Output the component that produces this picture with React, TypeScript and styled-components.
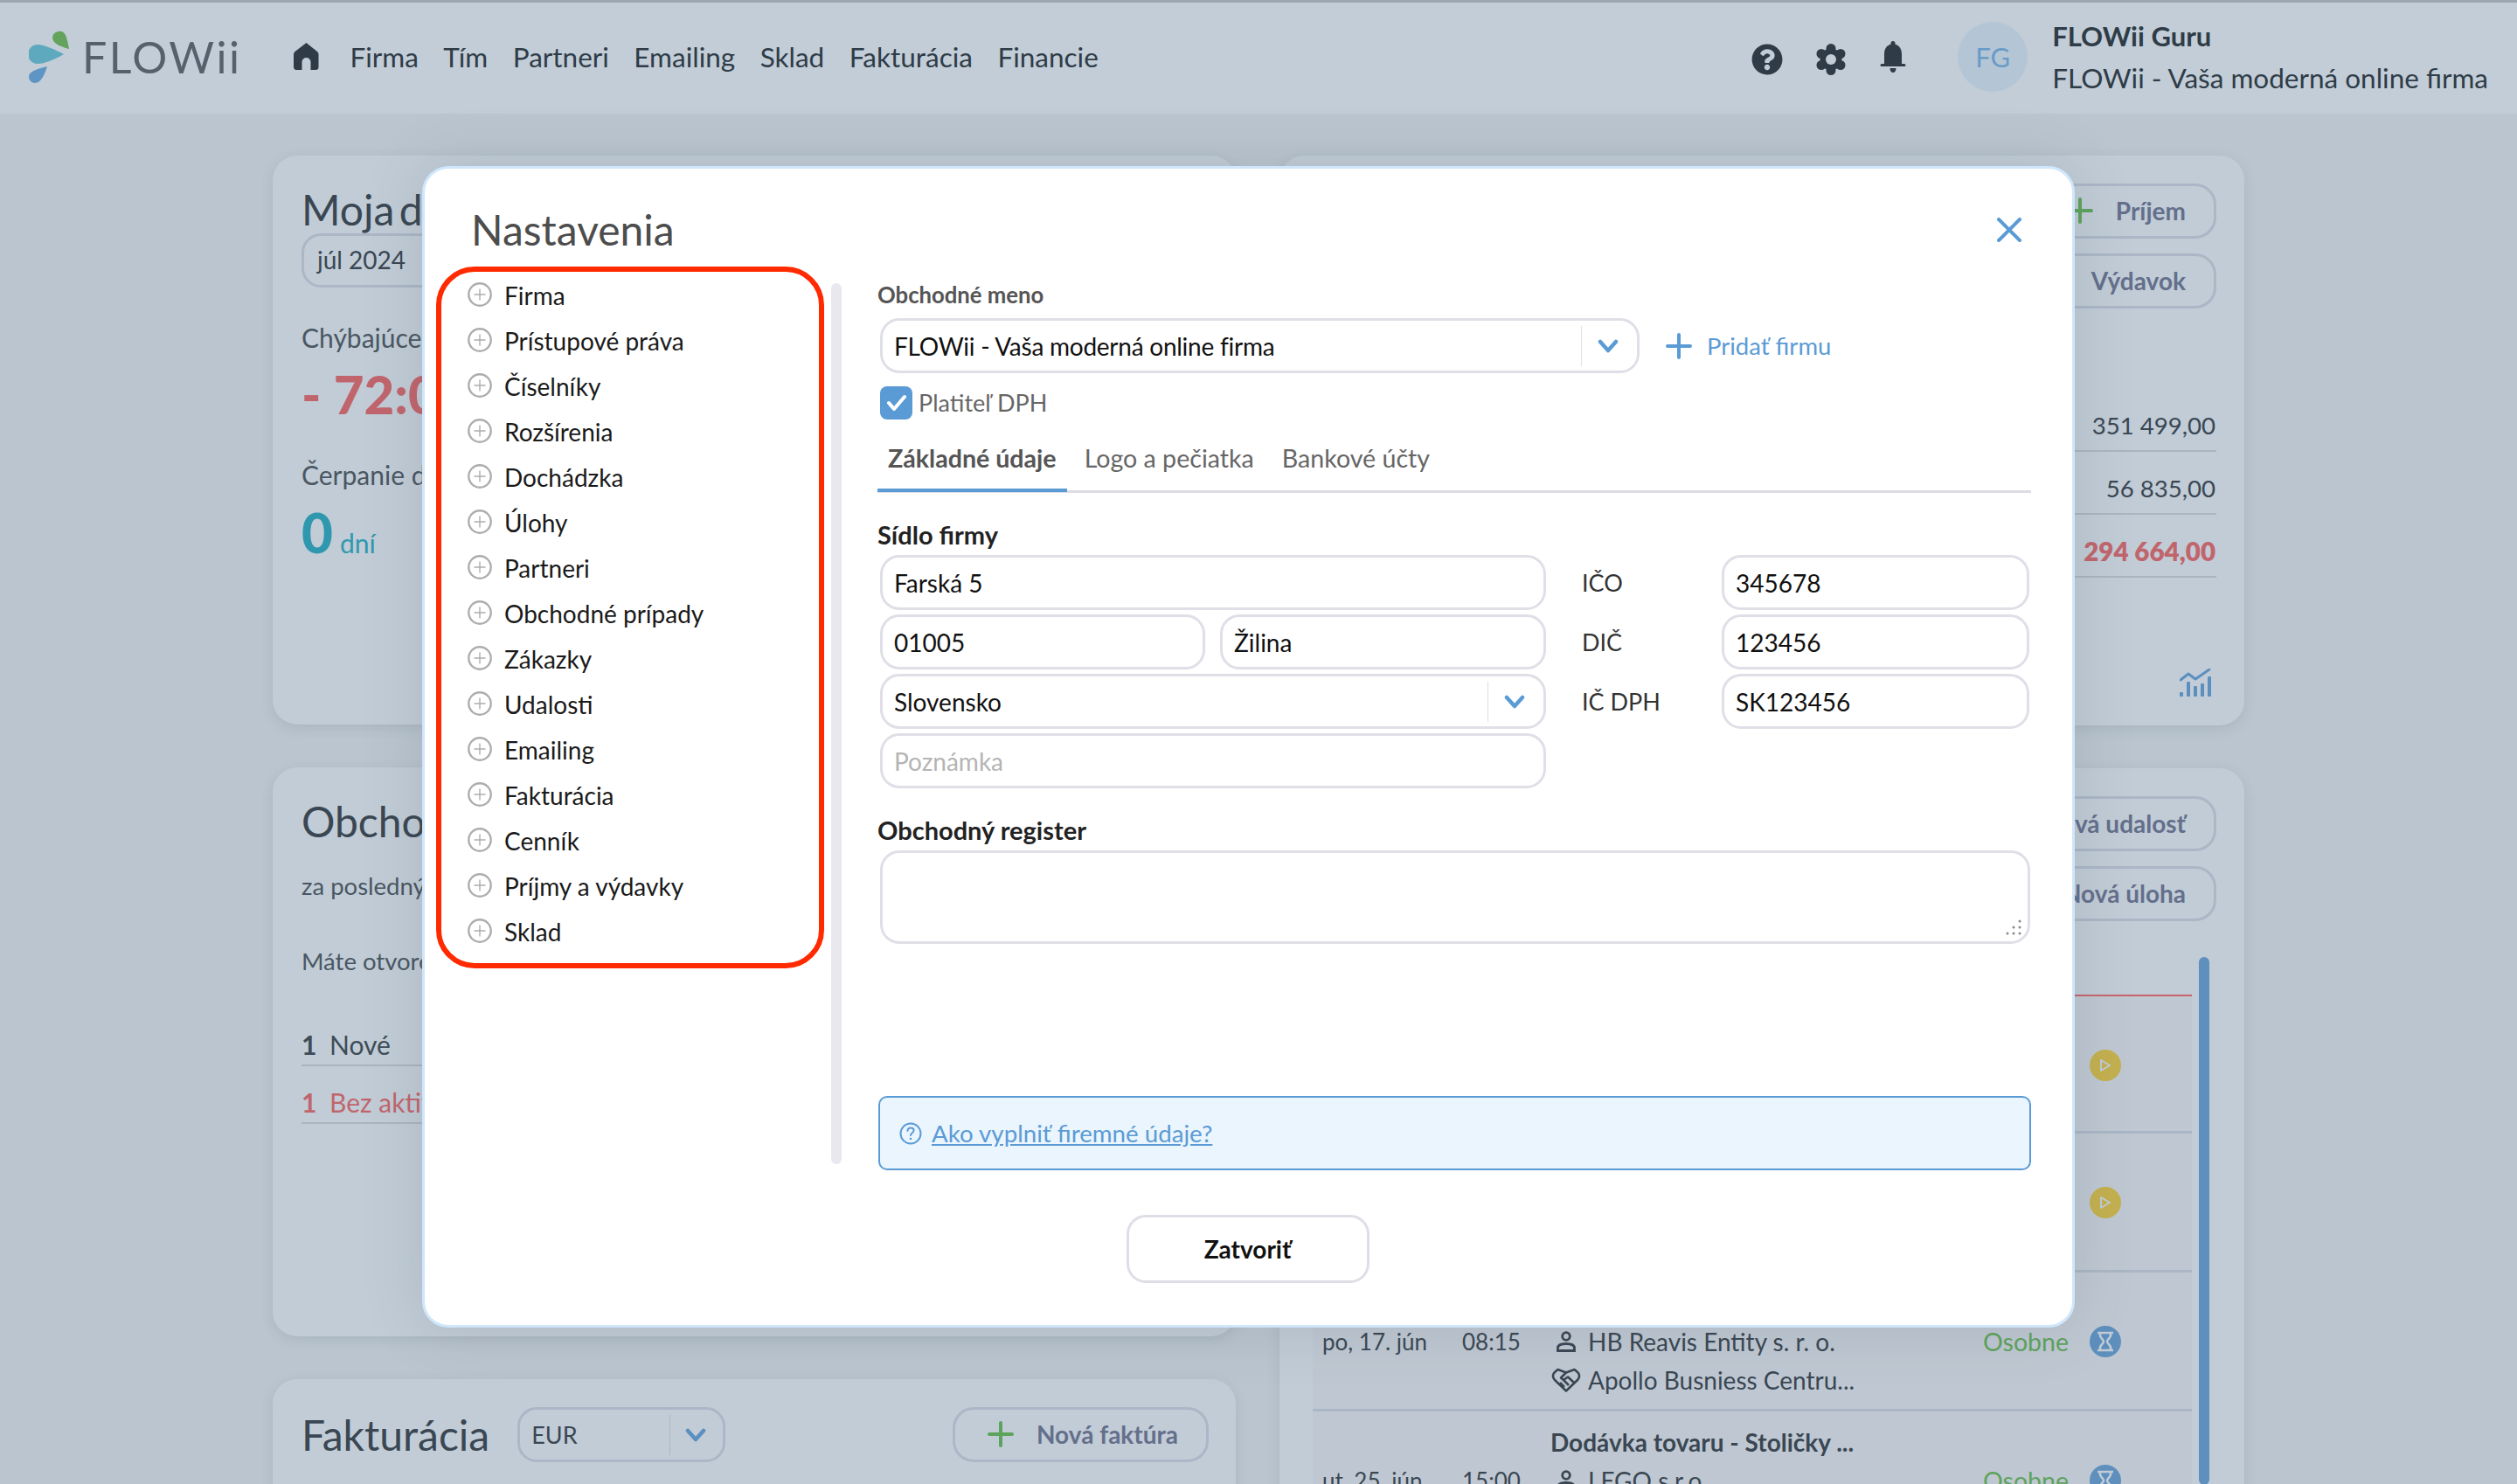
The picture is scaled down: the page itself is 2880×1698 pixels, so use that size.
import React from "react";
import styled, { createGlobalStyle } from "styled-components";
import { FaQuestionCircle } from "react-icons/fa";

const GlobalStyle = createGlobalStyle`
  html, body { margin: 0; padding: 0; background: #bac5cf; }
  * { box-sizing: border-box; }
  body { font-family: Lato, "Open Sans", sans-serif; }
`;

const Page = styled.div`
  position: relative;
  width: 2880px;
  height: 1698px;
  overflow: hidden;
  background: #bac5cf;
  color: #3a4753;
`;

const Header = styled.header`
  display: flex;
  align-items: center;
  height: 130px;
  padding: 0 33px 4px;
  background: #c2cdd7;
  border-top: 3px solid #9ba8b4;
`;

const Brand = styled.div`
  display: flex;
  align-items: center;
  width: 303px;
  gap: 15px;
`;

const BrandName = styled.span`
  font-size: 50px;
  font-weight: 400;
  letter-spacing: 2.5px;
  color: #55616c;
  line-height: 1;
`;

const Nav = styled.nav`
  display: flex;
  align-items: center;
  gap: 28.5px;
  font-size: 31.5px;
  color: #2f3c47;
`;

const NavHome = styled.span`
  display: flex;
  margin-right: 7px;
`;

const HeaderRight = styled.div`
  display: flex;
  align-items: center;
  margin-left: auto;
`;

const IconGroup = styled.div`
  display: flex;
  align-items: center;
  gap: 37px;
  padding-top: 7px;
  color: #2f3c47;
  margin-right: 58px;
`;

const Avatar = styled.div`
  display: flex;
  align-items: center;
  justify-content: center;
  width: 80px;
  height: 80px;
  border-radius: 50%;
  background: #b4c6d6;
  color: #6a9bc7;
  font-size: 31px;
  margin-right: 28px;
`;

const UserName = styled.div`
  font-size: 31px;
  font-weight: 700;
  color: #2f3c47;
  line-height: 48px;
`;

const UserCompany = styled.div`
  font-size: 31.5px;
  color: #2f3c47;
  line-height: 48px;
`;

const Dashboard = styled.main`
  display: grid;
  grid-template-columns: 1102px 1104px;
  column-gap: 50px;
  padding: 48px 0 0 312px;
`;

const Column = styled.div`
  display: flex;
  flex-direction: column;
  gap: 49px;
`;

const Card = styled.section<{ $h?: number }>`
  background: #c1ccd6;
  border-radius: 28px;
  height: ${(p) => (p.$h ? `${p.$h}px` : "auto")};
  padding: 34px 32px 0 33px;
  box-shadow: 0 4px 14px rgba(90, 105, 120, 0.16);
`;

const CardTitle = styled.h2`
  margin: 0;
  font-size: 48px;
  font-weight: 400;
  line-height: 56px;
  word-spacing: -7px;
  color: #3a4753;
`;

const Ghost = styled.div`
  display: flex;
  align-items: center;
  width: 300px;
  height: 62px;
  padding: 0 15px 2px;
  border: 3px solid #abb7c6;
  border-radius: 22px;
  font-size: 28px;
  margin-top: -1px;
`;

const Muted = styled.div<{ $mt: number; $size?: number }>`
  margin-top: ${(p) => p.$mt}px;
  font-size: ${(p) => p.$size ?? 30}px;
  line-height: 36px;
  color: #4a5763;
  white-space: nowrap;
`;

const BigRed = styled.div`
  margin-top: 17px;
  font-size: 60px;
  font-weight: 900;
  line-height: 60px;
  color: #c1656d;
  white-space: nowrap;
`;

const BigTeal = styled.div`
  margin-top: 18px;
  display: flex;
  align-items: baseline;
  gap: 8px;
  font-size: 30px;
  line-height: 60px;
  color: #2f98ae;
`;

const BigZero = styled.span`
  font-size: 62px;
  font-weight: 900;
`;

const CountRows = styled.div`
  margin-top: 36px;
`;

const CountRow = styled.div<{ $red?: boolean }>`
  display: flex;
  align-items: flex-end;
  height: 66px;
  padding-bottom: 5px;
  border-bottom: 2px solid #aab5c2;
  font-size: 30px;
  line-height: 36px;
  color: ${(p) => (p.$red ? "#c1656d" : "#3f4c58")};
`;

const CountNum = styled.b`
  width: 32px;
`;

const InvoiceBar = styled.div`
  display: flex;
  align-items: center;
  margin: -2px -1px 0 0;
`;

const SmallSelect = styled.div`
  display: flex;
  align-items: center;
  width: 238px;
  height: 63px;
  margin-left: 32px;
  padding-left: 13px;
  border: 3px solid #abb7c6;
  border-radius: 22px;
  font-size: 27px;
  color: #3a4753;
`;

const SelectValue = styled.span<{ $tight?: boolean }>`
  flex: 1;
  white-space: nowrap;
  letter-spacing: ${(p) => (p.$tight ? "-0.25px" : "normal")};
`;

const SelectDivider = styled.span<{ $w: number; $color: string }>`
  display: flex;
  align-items: center;
  justify-content: center;
  width: ${(p) => p.$w}px;
  height: 46px;
  padding-right: 3px;
  border-left: 1px solid ${(p) => p.$color};
`;

const GhostButton = styled.div<{ $w: number; $ml?: string }>`
  display: flex;
  align-items: center;
  justify-content: flex-end;
  gap: 26px;
  width: ${(p) => p.$w}px;
  height: 63px;
  margin-left: ${(p) => p.$ml ?? "0"};
  padding: 0 32px 2px 0;
  border: 3px solid #abb7c6;
  border-radius: 24px;
  font-size: 28px;
  font-weight: 700;
  color: #646f8c;
  white-space: nowrap;
`;

const RightStack = styled.div<{ $gap: number }>`
  display: flex;
  flex-direction: column;
  align-items: flex-end;
  gap: ${(p) => p.$gap}px;
  margin-top: -2px;
`;

const ValueRows = styled.div`
  margin-top: 92px;
`;

const ValueRow = styled.div<{ $red?: boolean }>`
  display: flex;
  justify-content: flex-end;
  align-items: center;
  height: 72px;
  padding: 12px 1px 0 0;
  border-bottom: 2px solid #aab5c2;
  font-size: ${(p) => (p.$red ? 29.5 : 27.6)}px;
  font-weight: ${(p) => (p.$red ? 800 : 400)};
  color: ${(p) => (p.$red ? "#c1656d" : "#3a4753")};
`;

const ChartSlot = styled.div`
  display: flex;
  justify-content: flex-end;
  margin-top: 104px;
  padding-right: 6px;
`;

const ListWrap = styled.div`
  display: flex;
  gap: 8px;
  margin: 41px -32px 0 5px;
`;

const Rows = styled.div`
  width: 1006px;
  padding-top: 43px;
`;

const EventRow = styled.div<{ $first?: boolean }>`
  display: grid;
  grid-template-columns: 160px 101px 495px 122px 36px;
  grid-auto-rows: 44px;
  align-items: center;
  height: 159px;
  padding: 13px 0 0 11px;
  background: #bfc8d2;
  border-top: ${(p) => (p.$first ? "2px solid #c9646c" : "0")};
  border-bottom: 3px solid #abb6c4;
  font-size: 28px;
  color: #3a4753;
`;

const EventTitle = styled.div`
  grid-column: 3 / 6;
  font-weight: 700;
  white-space: nowrap;
`;

const EventDate = styled.div<{ $col: number }>`
  grid-column: ${(p) => p.$col};
  grid-row: 2;
  font-size: 26px;
  white-space: nowrap;
`;

const EventParty = styled.div<{ $row: number }>`
  grid-column: 3;
  grid-row: ${(p) => p.$row};
  display: flex;
  align-items: center;
  gap: 7px;
  white-space: nowrap;
`;

const PartyIcon = styled.span`
  display: flex;
  justify-content: center;
  width: 36px;
`;

const EventTag = styled.div`
  grid-column: 4;
  grid-row: 2;
  color: #5ea35c;
  font-size: 28.5px;
`;

const StatusDot = styled.div<{ $color: string }>`
  grid-column: 5;
  grid-row: 2;
  display: flex;
  align-items: center;
  justify-content: center;
  width: 36px;
  height: 36px;
  border-radius: 50%;
  background: ${(p) => p.$color};
`;

const ThumbTrack = styled.div`
  width: 12px;
  height: 604px;
  border-radius: 6px;
  background: #5e8fbd;
`;

/* modal */

const Modal = styled.div`
  position: absolute;
  left: 483px;
  top: 190px;
  width: 1891px;
  height: 1329px;
  padding: 0 0 0 13px;
  background: #ffffff;
  border: 3px solid #cfe6fb;
  border-radius: 30px;
  box-shadow: 0 0 70px rgba(70, 80, 95, 0.16);
`;

const ModalHead = styled.div`
  display: flex;
  align-items: center;
  justify-content: space-between;
  height: 112px;
  padding: 42px 58px 14px 40px;
`;

const ModalTitle = styled.h1`
  margin: 0;
  font-size: 48px;
  font-weight: 400;
  line-height: 56px;
  color: #4d4d4d;
`;

const ModalBody = styled.div`
  display: flex;
  align-items: flex-start;
  height: 1034px;
`;

const Menu = styled.ul`
  width: 444px;
  height: 803px;
  margin: 0;
  padding: 0 0 0 30px;
  list-style: none;
  border: 6px solid #ff2a00;
  border-radius: 44px;
`;

const MenuItem = styled.li`
  display: flex;
  align-items: center;
  gap: 14px;
  height: 52px;
  font-size: 28px;
  color: #1a1a1a;
`;

const MenuText = styled.span`
  padding-top: 2px;
`;

const MenuTrack = styled.div`
  width: 12px;
  height: 1008px;
  margin: 19px 0 0 8px;
  border-radius: 6px;
  background: #e8e8ee;
`;

const Content = styled.div`
  width: 1320px;
  margin-left: 41px;
  padding-top: 14px;
`;

const FieldLabel = styled.div<{ $mt?: number; $dark?: boolean }>`
  margin-top: ${(p) => p.$mt ?? 0}px;
  font-size: ${(p) => (p.$dark ? 29 : 25.7)}px;
  font-weight: 700;
  line-height: 36px;
  color: ${(p) => (p.$dark ? "#222222" : "#555555")};
`;

const CompanyRow = styled.div`
  display: flex;
  align-items: center;
  margin: 9px 0 0 3px;
`;

const Field = styled.div<{ $w?: number; $muted?: boolean }>`
  display: flex;
  align-items: center;
  width: ${(p) => (p.$w ? `${p.$w}px` : "100%")};
  height: 63px;
  padding-left: 13px;
  border: 3px solid #dfdfe7;
  border-radius: 22px;
  background: #ffffff;
  font-size: 28px;
  color: ${(p) => (p.$muted ? "#b4b4b4" : "#111111")};
  white-space: nowrap;
`;

const AddCompany = styled.div`
  display: flex;
  align-items: center;
  gap: 17px;
  margin-left: 30px;
  font-size: 27.5px;
  color: #5b9bd5;
`;

const VatRow = styled.div`
  display: flex;
  align-items: center;
  gap: 7px;
  margin: 15px 0 0 3px;
  font-size: 27px;
  line-height: 38px;
  color: #666666;
`;

const CheckBox = styled.span`
  display: flex;
  align-items: center;
  justify-content: center;
  width: 37px;
  height: 38px;
  border-radius: 8px;
  background: #5b9bd5;
`;

const TabBar = styled.div`
  display: flex;
  gap: 8px;
  height: 67px;
  margin-top: 17px;
  box-shadow: inset 0 -3px 0 #dcdce4;
`;

const Tab = styled.div<{ $active?: boolean }>`
  height: 66px;
  padding: 9px 12px 0;
  font-size: 28.6px;
  line-height: 36px;
  font-weight: ${(p) => (p.$active ? 700 : 400)};
  color: ${(p) => (p.$active ? "#555555" : "#666666")};
  border-bottom: 4px solid ${(p) => (p.$active ? "#5b9bd5" : "transparent")};
`;

const AddressGrid = styled.div`
  display: flex;
  gap: 41px;
  margin: 5px 0 0 3px;
`;

const AddressCol = styled.div`
  display: flex;
  flex-direction: column;
  gap: 5px;
  width: 762px;
`;

const CityRow = styled.div`
  display: flex;
  gap: 17px;
`;

const IdCol = styled.div`
  display: grid;
  grid-template-columns: 160px 352px;
  grid-auto-rows: 63px;
  row-gap: 5px;
  align-items: center;
  font-size: 27px;
  color: #333333;
`;

const RegisterBox = styled.div`
  position: relative;
  width: 1316px;
  height: 107px;
  margin: 5px 0 0 3px;
  border: 3px solid #dfdfe7;
  border-radius: 22px;
`;

const ResizeGrip = styled.svg`
  position: absolute;
  right: 7px;
  bottom: 7px;
`;

const InfoBox = styled.div`
  display: flex;
  align-items: center;
  gap: 11px;
  height: 85px;
  margin: 174px 0 0 1px;
  padding-left: 22px;
  border: 2px solid #5b9bd5;
  border-radius: 10px;
  background: #eaf5fe;
`;

const InfoLink = styled.a`
  font-size: 27.7px;
  color: #5b9bd5;
  text-decoration: underline;
`;

const ModalFoot = styled.div`
  display: flex;
  justify-content: center;
  padding-right: 15px;
  margin-top: 51px;
`;

const CloseButton = styled.div`
  display: flex;
  align-items: center;
  justify-content: center;
  width: 278px;
  height: 78px;
  border: 3px solid #dedee6;
  border-radius: 22px;
  font-size: 28px;
  font-weight: 700;
  color: #111111;
`;

const Chevron = ({ color = "#5b9bd5" }: { color?: string }) => (
  <svg width="24" height="16" viewBox="0 0 24 16" fill="none">
    <path d="M3 3l9 10 9-10" stroke={color} strokeWidth="4.5" strokeLinecap="round" strokeLinejoin="round" />
  </svg>
);

const Plus = ({ color, size = 30, width = 4 }: { color: string; size?: number; width?: number }) => (
  <svg width={size} height={size} viewBox="0 0 30 30" fill="none">
    <path d="M15 2v26M2 15h26" stroke={color} strokeWidth={width} strokeLinecap="round" />
  </svg>
);

const MenuIcon = () => (
  <svg width="28" height="28" viewBox="0 0 28 28" fill="none">
    <circle cx="14" cy="14" r="12.7" stroke="#adadad" strokeWidth="2.4" />
    <path d="M14 7.5v13M7.5 14h13" stroke="#adadad" strokeWidth="1.4" />
  </svg>
);

const Logo = () => (
  <svg width="46" height="60" viewBox="0 0 46 60">
    <path d="M46 21C38 19 27 15 27 8a8 8 0 0 1 15-3c2 5 3 11 4 16z" fill="#63a35c" />
    <path d="M40 27C30 33 18 38 10 38A11 11 0 0 1 10 16C18 16 30 22 40 27z" fill="#5fa9bf" />
    <path d="M21 41C19 47 15 60 7 60A7 7 0 0 1 0 53c0-7 13-10 21-12z" fill="#5f95c4" />
  </svg>
);

const HomeIcon = () => (
  <svg width="29" height="31" viewBox="0 0 29 31">
    <path
      d="M14.5 0L27 10c1 1 1.500 2 1.500 3v15c0 1.500-1 3-3 3H19.500v-9a5 5 0 0 0-10 0v9H3c-2 0-3-1.500-3-3V13c0-1 .5-2 1.500-3z"
      fill="#2f3c47"
    />
  </svg>
);

const GearIcon = () => (
  <svg width="36" height="36" viewBox="0 0 36 36" fill="#2f3c47">
    <circle cx="18" cy="18" r="12.5" />
    <circle cx="18" cy="5.500" r="5.500" />
    <circle cx="18" cy="30.500" r="5.500" />
    <circle cx="7" cy="11.500" r="5.500" />
    <circle cx="29" cy="11.500" r="5.500" />
    <circle cx="7" cy="24.500" r="5.500" />
    <circle cx="29" cy="24.500" r="5.500" />
    <circle cx="18" cy="18" r="6" fill="#c2cdd7" />
  </svg>
);

const BellIcon = () => (
  <svg width="32" height="42" viewBox="0 0 32 42" fill="#2f3c47">
    <path d="M16 0a2.500 2.500 0 0 1 2.500 2.500v1.300C23.500 5 26 9.500 26 15v11h3a1 1 0 0 1 0 3H3a1 1 0 0 1 0-3h3V15C6 9.500 8.500 5 13.500 3.800V2.500A2.500 2.500 0 0 1 16 0z" />
    <path d="M12.500 31h7c0 3-1.500 5-3.500 5s-3.500-2-3.500-5z" />
  </svg>
);

const CloseX = () => (
  <svg width="28" height="28" viewBox="0 0 28 28" fill="none">
    <path d="M2 2l24 24M26 2L2 26" stroke="#5b9bd5" strokeWidth="4" strokeLinecap="round" />
  </svg>
);

const CheckMark = () => (
  <svg width="24" height="20" viewBox="0 0 24 20" fill="none">
    <path d="M3 10l6 7L21 3" stroke="#ffffff" strokeWidth="4" strokeLinecap="round" strokeLinejoin="round" />
  </svg>
);

const HelpOutline = () => (
  <svg width="26" height="26" viewBox="0 0 26 26" fill="none">
    <circle cx="13" cy="13" r="11.5" stroke="#5b9bd5" strokeWidth="2" />
    <path d="M9.500 10c0-2.200 1.600-3.500 3.600-3.500 2 0 3.500 1.200 3.500 3 0 2.700-3.600 2.800-3.600 5.500" stroke="#5b9bd5" strokeWidth="2" strokeLinecap="round" />
    <circle cx="13" cy="19" r="1.300" fill="#5b9bd5" />
  </svg>
);

const ChartIcon = () => (
  <svg width="36" height="32" viewBox="0 0 36 32" fill="#5b8fc0">
    <path d="M1 13l9-7 8 6L34 1" fill="none" stroke="#5b8fc0" strokeWidth="3" strokeLinecap="round" strokeLinejoin="round" />
    <rect x="0" y="27" width="4" height="5" rx="1" />
    <rect x="8" y="15" width="4" height="17" rx="1" />
    <rect x="16" y="20" width="4" height="12" rx="1" />
    <rect x="24" y="17" width="4" height="15" rx="1" />
    <rect x="32" y="9" width="4" height="23" rx="1" />
  </svg>
);

const PlayIcon = () => (
  <svg width="16" height="16" viewBox="0 0 16 16" fill="none">
    <path d="M3 2l10 6-10 6z" stroke="#c1ccd6" strokeWidth="2" strokeLinejoin="round" />
  </svg>
);

const HourglassIcon = () => (
  <svg width="20" height="24" viewBox="0 0 20 24" fill="none" stroke="#c1ccd6" strokeWidth="2.6">
    <path d="M1 2h18M1 22h18M4 2v3c0 3 4 4.500 4 7s-4 4-4 7v3M16 2v3c0 3-4 4.500-4 7s4 4 4 7v3" />
  </svg>
);

const PersonIcon = () => (
  <svg width="24" height="24" viewBox="0 0 24 24" fill="none" stroke="#3a4753" strokeWidth="2.8">
    <circle cx="12" cy="6" r="4.300" />
    <path d="M2.500 22.500v-3c0-3.500 4-5 9.500-5s9.500 1.500 9.500 5v3z" />
  </svg>
);

const HandshakeIcon = () => (
  <svg width="34" height="28" viewBox="0 0 34 28" fill="none" stroke="#3a4753" strokeWidth="2.600" strokeLinejoin="round">
    <path d="M17 26.500L4 14C1 11 1.500 7 4 5l3.500-3 9.500 3.500L26.500 2 30 5c2.500 2 3 6 0 9z" />
    <path d="M17 5.500l-6 6 3 2.500 5-3.500 7 6.500M10 17l5 5M14 14l6 6" />
  </svg>
);

const menuItems = [
  "Firma",
  "Prístupové práva",
  "Číselníky",
  "Rozšírenia",
  "Dochádzka",
  "Úlohy",
  "Partneri",
  "Obchodné prípady",
  "Zákazky",
  "Udalosti",
  "Emailing",
  "Fakturácia",
  "Cenník",
  "Príjmy a výdavky",
  "Sklad",
];

const navItems = ["Firma", "Tím", "Partneri", "Emailing", "Sklad", "Fakturácia", "Financie"];

export default function App() {
  return (
    <Page>
      <GlobalStyle />
      <Header>
        <Brand>
          <Logo />
          <BrandName>FLOWii</BrandName>
        </Brand>
        <Nav>
          <NavHome>
            <HomeIcon />
          </NavHome>
          {navItems.map((n) => (
            <span key={n}>{n}</span>
          ))}
        </Nav>
        <HeaderRight>
          <IconGroup>
            <FaQuestionCircle size={36} />
            <GearIcon />
            <BellIcon />
          </IconGroup>
          <Avatar>FG</Avatar>
          <div>
            <UserName>FLOWii Guru</UserName>
            <UserCompany>FLOWii - Vaša moderná online firma</UserCompany>
          </div>
        </HeaderRight>
      </Header>

      <Dashboard>
        <Column>
          <Card $h={651}>
            <CardTitle>Moja dochádzka</CardTitle>
            <Ghost>júl 2024</Ghost>
            <Muted $mt={39}>Chýbajúce hodiny</Muted>
            <BigRed>- 72:00</BigRed>
            <Muted $mt={44}>Čerpanie dovolenky</Muted>
            <BigTeal>
              <BigZero>0</BigZero> dní
            </BigTeal>
          </Card>
          <Card $h={651}>
            <CardTitle>Obchodné prípady</CardTitle>
            <Muted $mt={28} $size={27.5}>za posledných 30 dní</Muted>
            <Muted $mt={50} $size={27.5}>Máte otvorených</Muted>
            <CountRows>
              <CountRow>
                <CountNum>1</CountNum>Nové
              </CountRow>
              <CountRow $red>
                <CountNum>1</CountNum>Bez aktivity
              </CountRow>
            </CountRows>
          </Card>
          <Card $h={200}>
            <InvoiceBar>
              <CardTitle>Fakturácia</CardTitle>
              <SmallSelect>
                <SelectValue>EUR</SelectValue>
                <SelectDivider $w={61} $color="#abb7c6">
                  <Chevron color="#5b8fc0" />
                </SelectDivider>
              </SmallSelect>
              <GhostButton $w={293} $ml="auto">
                <Plus color="#5ea35c" />
                Nová faktúra
              </GhostButton>
            </InvoiceBar>
          </Card>
        </Column>

        <Column>
          <Card $h={652}>
            <RightStack $gap={17}>
              <GhostButton $w={240}>
                <Plus color="#5ea35c" />
                Príjem
              </GhostButton>
              <GhostButton $w={240}>Výdavok</GhostButton>
            </RightStack>
            <ValueRows>
              <ValueRow>351 499,00</ValueRow>
              <ValueRow>56 835,00</ValueRow>
              <ValueRow $red>294 664,00</ValueRow>
            </ValueRows>
            <ChartSlot>
              <ChartIcon />
            </ChartSlot>
          </Card>
          <Card>
            <RightStack $gap={17}>
              <GhostButton $w={340}>Nová udalosť</GhostButton>
              <GhostButton $w={340}>Nová úloha</GhostButton>
            </RightStack>
            <ListWrap>
              <Rows>
                <EventRow $first>
                  <StatusDot $color="#c4b04f">
                    <PlayIcon />
                  </StatusDot>
                </EventRow>
                <EventRow>
                  <StatusDot $color="#c4b04f">
                    <PlayIcon />
                  </StatusDot>
                </EventRow>
                <EventRow>
                  <EventDate $col={1}>po, 17. jún</EventDate>
                  <EventDate $col={2}>08:15</EventDate>
                  <EventParty $row={2}>
                    <PartyIcon>
                      <PersonIcon />
                    </PartyIcon>
                    HB Reavis Entity s. r. o.
                  </EventParty>
                  <EventParty $row={3}>
                    <PartyIcon>
                      <HandshakeIcon />
                    </PartyIcon>
                    Apollo Busniess Centru...
                  </EventParty>
                  <EventTag>Osobne</EventTag>
                  <StatusDot $color="#5e8fbd">
                    <HourglassIcon />
                  </StatusDot>
                </EventRow>
                <EventRow>
                  <EventTitle>Dodávka tovaru - Stoličky ...</EventTitle>
                  <EventDate $col={1}>ut, 25. jún</EventDate>
                  <EventDate $col={2}>15:00</EventDate>
                  <EventParty $row={2}>
                    <PartyIcon>
                      <PersonIcon />
                    </PartyIcon>
                    LEGO s.r.o.
                  </EventParty>
                  <EventTag>Osobne</EventTag>
                  <StatusDot $color="#5e8fbd">
                    <HourglassIcon />
                  </StatusDot>
                </EventRow>
              </Rows>
              <ThumbTrack />
            </ListWrap>
          </Card>
        </Column>
      </Dashboard>

      <Modal>
        <ModalHead>
          <ModalTitle>Nastavenia</ModalTitle>
          <CloseX />
        </ModalHead>
        <ModalBody>
          <Menu>
            {menuItems.map((m) => (
              <MenuItem key={m}>
                <MenuIcon />
                <MenuText>{m}</MenuText>
              </MenuItem>
            ))}
          </Menu>
          <MenuTrack />
          <Content>
            <FieldLabel>Obchodné meno</FieldLabel>
            <CompanyRow>
              <Field $w={869}>
                <SelectValue $tight>FLOWii - Vaša moderná online firma</SelectValue>
                <SelectDivider $w={64} $color="#dfdfe7">
                  <Chevron />
                </SelectDivider>
              </Field>
              <AddCompany>
                <Plus color="#5b9bd5" />
                Pridať firmu
              </AddCompany>
            </CompanyRow>
            <VatRow>
              <CheckBox>
                <CheckMark />
              </CheckBox>
              Platiteľ DPH
            </VatRow>
            <TabBar>
              <Tab $active>Základné údaje</Tab>
              <Tab>Logo a pečiatka</Tab>
              <Tab>Bankové účty</Tab>
            </TabBar>
            <FieldLabel $mt={30} $dark>
              Sídlo firmy
            </FieldLabel>
            <AddressGrid>
              <AddressCol>
                <Field>Farská 5</Field>
                <CityRow>
                  <Field $w={372}>01005</Field>
                  <Field $w={373}>Žilina</Field>
                </CityRow>
                <Field>
                  <SelectValue>Slovensko</SelectValue>
                  <SelectDivider $w={64} $color="#dfdfe7">
                    <Chevron />
                  </SelectDivider>
                </Field>
                <Field $muted>Poznámka</Field>
              </AddressCol>
              <IdCol>
                <span>IČO</span>
                <Field>345678</Field>
                <span>DIČ</span>
                <Field>123456</Field>
                <span>IČ DPH</span>
                <Field>SK123456</Field>
              </IdCol>
            </AddressGrid>
            <FieldLabel $mt={30} $dark>
              Obchodný register
            </FieldLabel>
            <RegisterBox>
              <ResizeGrip width="18" height="18" viewBox="0 0 18 18" fill="#8a8a8a">
                <circle cx="16" cy="2" r="1.500" />
                <circle cx="16" cy="9" r="1.500" />
                <circle cx="16" cy="16" r="1.500" />
                <circle cx="9" cy="9" r="1.500" />
                <circle cx="9" cy="16" r="1.500" />
                <circle cx="2" cy="16" r="1.500" />
              </ResizeGrip>
            </RegisterBox>
            <InfoBox>
              <HelpOutline />
              <InfoLink>Ako vyplniť firemné údaje?</InfoLink>
            </InfoBox>
          </Content>
        </ModalBody>
        <ModalFoot>
          <CloseButton>Zatvoriť</CloseButton>
        </ModalFoot>
      </Modal>
    </Page>
  );
}
